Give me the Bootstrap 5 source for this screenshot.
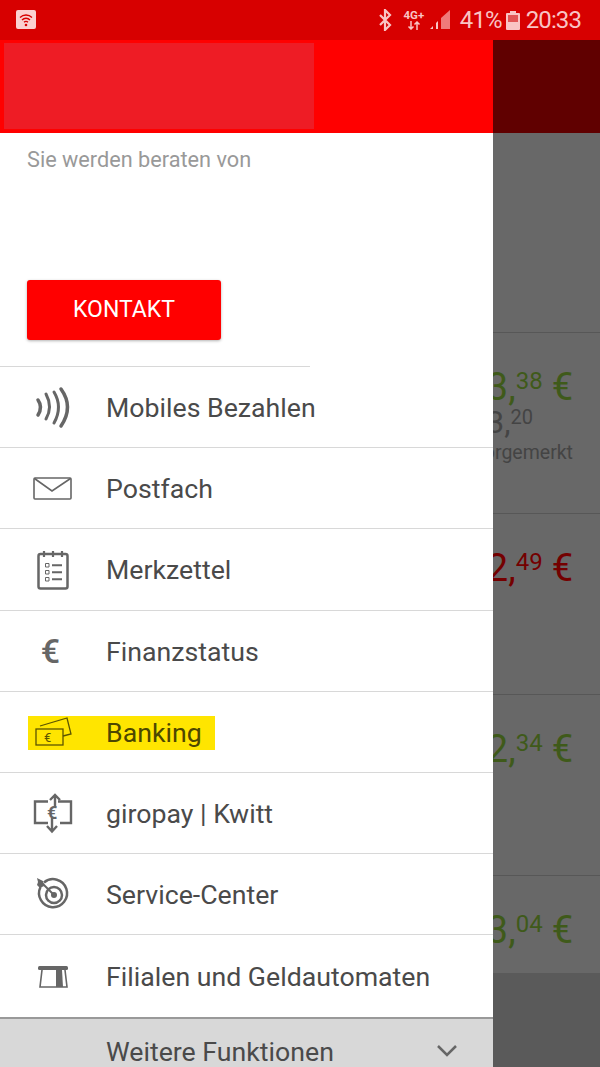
<!DOCTYPE html>
<html lang="de">
<head>
<meta charset="UTF-8">
<meta name="viewport" content="width=device-width, initial-scale=1.0">
<link rel="stylesheet" href="https://cdn.jsdelivr.net/npm/bootstrap@5.3.0/dist/css/bootstrap.min.css">
<title>Banking Menü</title>
<style>
html, body { height: 1067px; overflow: hidden; }
body { font-family: Roboto, "Liberation Sans", sans-serif; background: #686868; color: #444; }
.statusbar { height: 40px; background: #d70000; color: #f9c4c4; padding: 0 19px 0 16px; }
.status-text { font-size: 24px; letter-spacing: -.9px; line-height: 40px; }
.bt-ico { margin-right: 10px; }
.lte { width: 24px; }
.lte-label { font-size: 11.5px; font-weight: 700; line-height: 11px; letter-spacing: 0; text-align: center; }
.lte svg { display: block; margin: 0 auto; }
.bat-ico { margin: 0 5px 0 3px; }
.page { height: 1027px; }
.drawer { width: 493px; background: #fff; height: 100%; overflow: hidden; flex: none; }
.drawer > * { flex-shrink: 0; }
.drawer-head { height: 93px; background: #f00; padding: 3px 0 4px 4px; }
.logo-box { width: 310px; height: 100%; background: #ee1c25; }
.advisor { height: 233px; padding: 14px 27px 0; }
.advisor-label { font-size: 21.7px; line-height: 26px; color: #999; height: 133px; }
.btn-kontakt { width: 194px; height: 60px; background: #f00; color: #fff; border: 0; border-radius: 3px; font-size: 23px; box-shadow: 0 1px 3px rgba(0,0,0,.3); padding: 0; }
.btn-kontakt:hover { background: #f00; color: #fff; }
.short-rule { width: 310px; height: 1px; background: #d8d8d8; }
.list-group-flush > .menu-row { height: 81.2px; padding: 0; border-width: 0 0 1px; border-color: #d8d8d8; font-size: 26.7px; color: #4a4a4a; }
.list-group-flush > .menu-row:last-child { border-width: 0; }
.menu-label { padding-top: 2px; }
.ico-cell { width: 106px; padding-right: 2px; flex: none; }
.ico-cell svg { display: block; }
.marker { background: #ffe500; color: #4d4700; height: 34px; margin-left: 28px; padding-right: 13px; margin-top: 3px; }
.marker .ico-cell { width: 78px; padding: 0; justify-content: flex-start !important; }
.euro-glyph { font-size: 34px; font-weight: 500; color: #666; line-height: 1; margin-right: 3px; }
.more-row { height: 60px; background: #d8d8d8; border-top: 2px solid #999; padding: 16px 36px 0 106px; font-size: 26.7px; line-height: 34px; color: #4a4a4a; }
.chevron { margin-top: 9px; }
.side { width: 107px; height: 100%; overflow: hidden; flex: none; }
.side > * { flex-shrink: 0; }
.side-top { height: 93px; background: #600000; }
.side-blank { height: 200px; border-bottom: 1px solid #575757; }
.side-row { height: 181px; border-bottom: 1px solid #575757; padding: 29px 27px 0 0; overflow: hidden; white-space: nowrap; }
.side-row.last-row { height: 97px; border-bottom: 0; }
.price { font-size: 38px; line-height: 38px; color: #3f5a1a; }
.price.minus { color: #740000; }
.cents { font-size: 24px; vertical-align: 11px; margin-right: 9px; }
.price-old { font-size: 32px; line-height: 22px; color: #444; padding-right: 40px; }
.price-old .cents { font-size: 20px; margin-right: 0; vertical-align: 9px; }
.noted { font-size: 19.5px; line-height: 24px; color: #444; margin-top: 8px; }
.side-bottom { flex: 1; background: #5a5a5a; }
</style>
</head>
<body>

<div class="statusbar d-flex align-items-center">
  <svg width="20" height="20" viewBox="0 0 20 20"><rect width="20" height="19" rx="2" fill="#fbd0d0"/><path d="M4 7.5a8.5 8.5 0 0 1 12 0M6 10a5.500 5.500 0 0 1 8 0M8 12.300a2.800 2.800 0 0 1 4 0" fill="none" stroke="#d70000" stroke-width="1.300"/><circle cx="10" cy="15" r="1.300" fill="#d70000"/></svg>
  <div class="ms-auto d-flex align-items-center">
    <svg class="bt-ico" width="14" height="22" viewBox="0 0 14 22"><path d="M2 6l10 10-5 5V1l5 5L2 16" fill="none" stroke="#f9c4c4" stroke-width="2.200"/></svg>
    <div class="lte">
      <div class="lte-label">4G+</div>
      <svg width="14" height="9" viewBox="0 0 14 9" fill="none" stroke="#f9c4c4" stroke-width="1.500"><path d="M4 0v8M1.500 5.500L4 8l2.500-2.500M10 9V1M7.500 3.500L10 1l2.500 2.500"/></svg>
    </div>
    <svg class="ms-1 me-2" width="22" height="22" viewBox="2 0 22 22"><path d="M2 20h3v-3zM8 20h2v-8l-2 2z" fill="#f9c4c4"/><path d="M13 20h9V1l-9 8z" fill="#f07a7a"/></svg>
    <span class="status-text">41%</span>
    <svg class="bat-ico" width="16" height="20" viewBox="0 0 16 20"><path d="M5 1h6v2h3a1 1 0 0 1 1 1v15a1 1 0 0 1-1 1H2a1 1 0 0 1-1-1V4a1 1 0 0 1 1-1h3z" fill="#f9c4c4"/><rect x="3" y="5" width="10" height="7" fill="#e25555"/></svg>
    <span class="status-text">20:33</span>
  </div>
</div>

<div class="page d-flex">
  <div class="drawer d-flex flex-column">
    <div class="drawer-head"><div class="logo-box"></div></div>
    <div class="advisor">
      <div class="advisor-label">Sie werden beraten von</div>
      <button class="btn btn-kontakt" type="button">KONTAKT</button>
    </div>
    <div class="short-rule"></div>
    <div class="list-group list-group-flush rounded-0">
      <div class="list-group-item menu-row d-flex align-items-center">
        <div class="ico-cell d-flex justify-content-center">
          <svg width="60" height="50" viewBox="0 0 60 50" fill="none" stroke="#666" stroke-linecap="round"><path d="M16 18Q21 25 16 33" stroke-width="3.500"/><path d="M24 12Q31 25 24 37" stroke-width="3"/><path d="M32 10Q41 25 32 41" stroke-width="3"/><path d="M39 7Q52 25 39 44" stroke-width="3.500"/></svg>
        </div>
        <span class="menu-label">Mobiles Bezahlen</span>
      </div>
      <div class="list-group-item menu-row d-flex align-items-center">
        <div class="ico-cell d-flex justify-content-center">
          <svg width="60" height="50" viewBox="0 0 60 50" fill="none" stroke="#666" stroke-width="1.600"><rect x="12" y="15" width="37" height="21" rx="1"/><path d="M12.500 15.500L30 28L48.500 15.500"/></svg>
        </div>
        <span class="menu-label">Postfach</span>
      </div>
      <div class="list-group-item menu-row d-flex align-items-center">
        <div class="ico-cell d-flex justify-content-center">
          <svg width="60" height="50" viewBox="0 0 60 50" fill="none" stroke="#666"><rect x="16.500" y="10" width="29" height="34.500" rx="2" stroke-width="2.500"/><path d="M22 7v6M31 7v6M40 7v6" stroke-width="2.200"/><path d="M23.500 19.500h3.500v3.500h-3.500zM23.500 26.500h3.500v3.500h-3.500zM23.500 33.500h3.500v3.500h-3.500z" stroke-width="1"/><path d="M30 21.300h10M30 28.300h10M30 35.300h10" stroke-width="2"/></svg>
        </div>
        <span class="menu-label">Merkzettel</span>
      </div>
      <div class="list-group-item menu-row d-flex align-items-center">
        <div class="ico-cell d-flex justify-content-center"><span class="euro-glyph">€</span></div>
        <span class="menu-label">Finanzstatus</span>
      </div>
      <div class="list-group-item menu-row d-flex align-items-center">
        <div class="marker d-inline-flex align-items-center">
          <div class="ico-cell d-flex">
            <svg width="60" height="50" viewBox="6 0 60 50" fill="none" stroke="#5c5500" stroke-width="1.300"><rect x="14" y="21" width="27" height="16"/><path d="M18 18L45 10L49 26L41 28"/><text x="22" y="34" font-family="Roboto, sans-serif" font-size="13" fill="#5c5500" stroke="none">€</text></svg>
          </div>
          Banking
        </div>
      </div>
      <div class="list-group-item menu-row d-flex align-items-center">
        <div class="ico-cell d-flex justify-content-center">
          <svg width="60" height="50" viewBox="0 0 60 50" fill="none" stroke="#666" stroke-width="2.400"><path d="M26 13.500H13V35H26M36 13.500H49V35H38"/><path d="M33 20V8M28 12L33 7L38 12M30 30V43M25 38L30 43.500L35 38"/><text x="25" y="31" font-family="Roboto, sans-serif" font-size="18" font-weight="700" fill="#666" stroke="none">€</text></svg>
        </div>
        <span class="menu-label">giropay | Kwitt</span>
      </div>
      <div class="list-group-item menu-row d-flex align-items-center">
        <div class="ico-cell d-flex justify-content-center">
          <svg width="60" height="50" viewBox="0 0 60 50" fill="none" stroke="#666" stroke-width="2.500"><path d="M22 13.500A14 14 0 1 1 18.500 18"/><circle cx="32" cy="26" r="8"/><circle cx="32" cy="26" r="3" fill="#666" stroke="none"/><path d="M32 26L20 14" stroke-width="2"/><path d="M15 9L21 12L22 17L18 19L15 16L16 13z" fill="#666" stroke="none"/></svg>
        </div>
        <span class="menu-label">Service-Center</span>
      </div>
      <div class="list-group-item menu-row d-flex align-items-center">
        <div class="ico-cell d-flex justify-content-center">
          <svg width="60" height="50" viewBox="0 0 60 50" fill="none" stroke="#666" stroke-width="1.600"><rect x="16" y="15" width="30" height="4" rx="1.500" fill="#666" stroke="none"/><path d="M20 19L18 36H45L43 19"/><path d="M34 19H40L41 36H34z" fill="#666" stroke="none"/></svg>
        </div>
        <span class="menu-label">Filialen und Geldautomaten</span>
      </div>
    </div>
    <div class="more-row d-flex justify-content-between">
      <span>Weitere Funktionen</span>
      <svg class="chevron" width="20" height="14" viewBox="0 0 20 14" fill="none" stroke="#666" stroke-width="2.500"><path d="M1 2l9 9 9-9"/></svg>
    </div>
  </div>

  <div class="side d-flex flex-column">
    <div class="side-top"></div>
    <div class="side-blank"></div>
    <div class="side-row d-flex flex-column align-items-end">
      <div class="price">3,<span class="cents">38</span>€</div>
      <div class="price-old">3,<span class="cents">20</span></div>
      <div class="noted">vorgemerkt</div>
    </div>
    <div class="side-row d-flex flex-column align-items-end">
      <div class="price minus">2,<span class="cents">49</span>€</div>
    </div>
    <div class="side-row d-flex flex-column align-items-end">
      <div class="price">2,<span class="cents">34</span>€</div>
    </div>
    <div class="side-row last-row d-flex flex-column align-items-end">
      <div class="price">3,<span class="cents">04</span>€</div>
    </div>
    <div class="side-bottom"></div>
  </div>
</div>

</body>
</html>
